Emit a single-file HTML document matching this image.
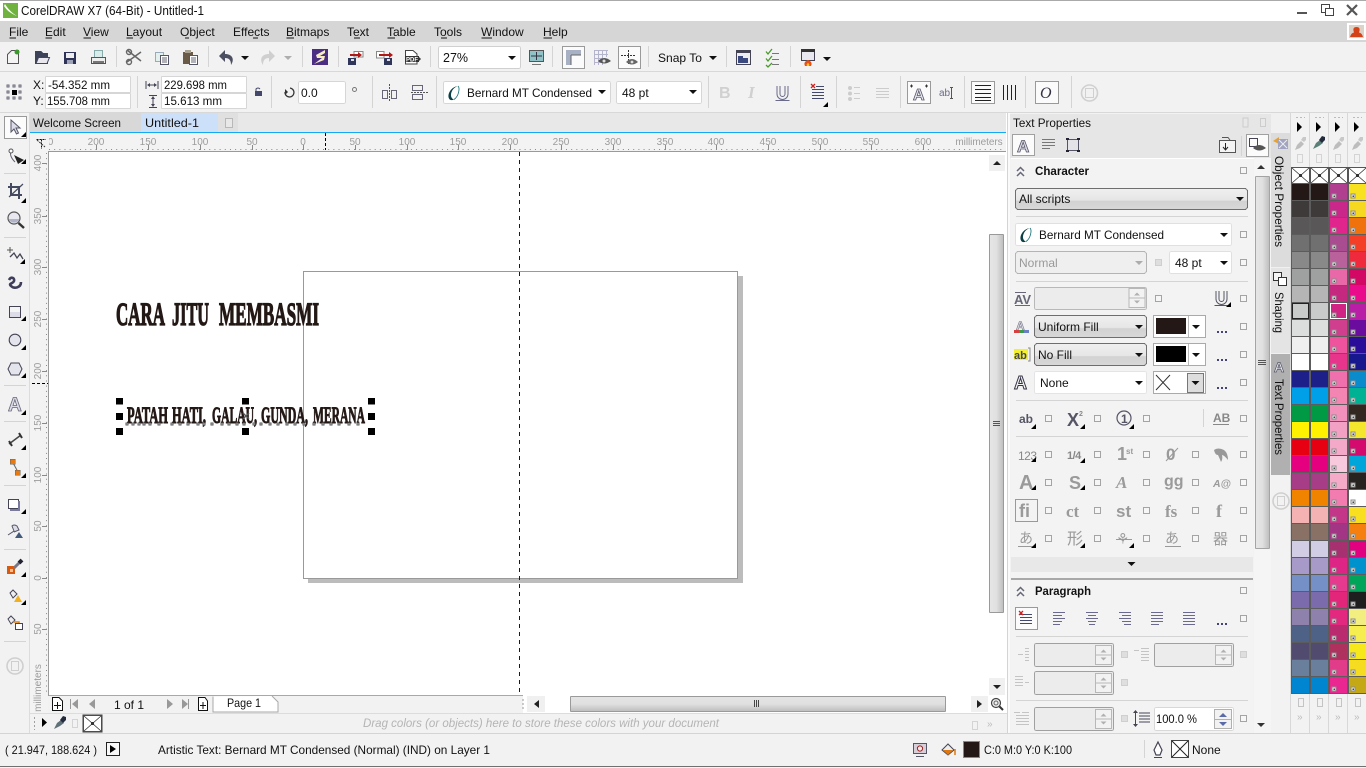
<!DOCTYPE html>
<html lang="en">
<head>
<meta charset="utf-8">
<title>CorelDRAW X7 (64-Bit) - Untitled-1</title>
<style>
html,body{margin:0;padding:0;width:1366px;height:768px;overflow:hidden;background:#f2f2f2}
svg{display:block;position:absolute;left:0;top:0}
text{font-family:"Liberation Sans","Noto Sans CJK JP",sans-serif;font-size:12px;fill:#111}
rect,line{shape-rendering:crispEdges}
.s rect{width:18px;height:17px;stroke:#5c5c5c;stroke-width:1px}
.r text{font-size:10px;fill:#9c9c9c;text-anchor:middle}
.g text{fill:#9a9a9a;font-weight:bold}
.sep{stroke:#d4d4d4;stroke-width:1}
.i{fill:none;stroke:#555;stroke-width:1.2}
.b1 text{font-family:"Liberation Serif",serif;font-size:33px;font-weight:bold;fill:#231815;stroke:#231815;stroke-width:1.3}
.b2 text{font-family:"Liberation Serif",serif;font-size:23px;font-weight:bold;fill:#231815;stroke:#231815;stroke-width:1}
</style>
</head>
<body>
<svg width="1366" height="768" viewBox="0 0 1366 768" xmlns="http://www.w3.org/2000/svg">
<defs>
<linearGradient id="gc" x1="0" y1="0" x2="0" y2="1"><stop offset="0" stop-color="#f0f0f0"/><stop offset=".55" stop-color="#e6e6e6"/><stop offset=".6" stop-color="#d2d2d2"/><stop offset="1" stop-color="#d8d8d8"/></linearGradient>
<linearGradient id="gs" x1="0" y1="0" x2="0" y2="1"><stop offset="0" stop-color="#e4e4e4"/><stop offset=".5" stop-color="#e0e0e0"/><stop offset="1" stop-color="#bdbdbd"/></linearGradient>
<linearGradient id="gv" x1="0" y1="0" x2="1" y2="0"><stop offset="0" stop-color="#e6e6e6"/><stop offset=".5" stop-color="#e0e0e0"/><stop offset="1" stop-color="#bdbdbd"/></linearGradient>
<g id="c"><rect x="-3" y="-3" width="6" height="6" fill="#f6f6f6" stroke="#a4a4a4"/></g>
<g id="cd"><rect x="-3" y="-3" width="6" height="6" fill="#dedede" stroke="#cfcfcf"/></g>
<polygon id="tr" points="0,5 5,5 5,0" fill="#000"/>
<polygon id="dn" points="-4,-2 4,-2 0,2" fill="#111"/>
<g id="spin"><rect x="0" y="0" width="16" height="19" fill="#f2f2f2" stroke="#b8b8b8"/><line x1="0" y1="9.5" x2="16" y2="9.5" stroke="#b8b8b8"/><polygon points="5,7 11,7 8,4" fill="#b0b0b0"/><polygon points="5,12 11,12 8,15" fill="#b0b0b0"/></g>
<g id="num"><rect x="0" y="0" width="79" height="23" rx="2" fill="#ececec" stroke="#a0a0a0"/><use href="#spin" x="61" y="2"/></g>
<g id="dots"><rect x="-4" y="0" width="2" height="2" fill="#44447a"/><rect x="0" y="0" width="2" height="2" fill="#44447a"/><rect x="4" y="0" width="2" height="2" fill="#44447a"/></g>
<g id="xb"><rect x=".5" y=".5" width="18" height="16" fill="#fff" stroke="#555"/><path d="M1 1 L18 16 M18 1 L1 16" stroke="#333" fill="none" stroke-width=".8"/><rect x="8" y="7" width="3" height="3" fill="#333"/></g>
<pattern id="mk" x="1329" y="183" width="19" height="17" patternUnits="userSpaceOnUse"><rect x="3" y="11" width="4" height="4" fill="#eee" stroke="#8c8c8c"/><rect x="4.5" y="12.5" width="1.5" height="1.5" fill="#444"/></pattern>
<g id="dr"><path d="M-5 7 L-3 2 L1 -2 L4 1 L0 5 Z" fill="#bdbdbd"/><path d="M1 -3 L3 -6 L6 -6 L6 -3 L4 -1 Z" fill="#c8c8c8"/></g>
<g id="O"><path d="M9 0C2 1 -2 8 0 12.5C1 14.5 3 14.5 5 13.5C2 12.5 1 9 3 5C4 3 6 1 9 0Z" fill="#0a3f46"/><path d="M9 0C11 2 10 10 5 13.5" fill="none" stroke="#0a6a72" stroke-width=".8"/></g>
</defs>

<!-- title bar -->
<rect x="0" y="0" width="1366" height="21" fill="#fff"/>
<rect x="0" y="0" width="1366" height="1" fill="#aaa"/>
<rect x="3" y="3" width="15" height="15" fill="#6fb23f"/>
<path d="M5 4 C8 9 12 13 17 16 C12 14 7 11 4 6 Z" fill="#fff"/>
<text x="21" y="15" textLength="183" lengthAdjust="spacingAndGlyphs" style="font-size:12.5px">CorelDRAW X7 (64-Bit) - Untitled-1</text>
<rect x="1297" y="12" width="10" height="2" fill="#555"/>
<g fill="none" stroke="#444" stroke-width="1.2"><rect x="1321.5" y="4.5" width="8" height="8"/><rect x="1325.5" y="8.5" width="8" height="7" fill="#fff"/></g>
<path d="M1347 5 L1357 15 M1357 5 L1347 15" stroke="#555" stroke-width="2.2" fill="none"/>

<!-- menu -->
<rect x="0" y="21" width="1366" height="21" fill="#d6d6d6"/>
<g style="font-size:12px">
<text x="9" y="36">File</text><text x="45" y="36">Edit</text><text x="83" y="36">View</text><text x="126" y="36">Layout</text><text x="180" y="36">Object</text><text x="233" y="36">Effects</text><text x="286" y="36">Bitmaps</text><text x="347" y="36">Text</text><text x="387" y="36">Table</text><text x="434" y="36">Tools</text><text x="481" y="36">Window</text><text x="543" y="36">Help</text>
</g>
<path d="M9.5 38H16M45.5 38H52M83.5 38H91M126.5 38H133M185 38H189M253 38H258M286.5 38H294M354 38H360M387.5 38H395M441 38H447M481.5 38H492M543.5 38H552" stroke="#111" fill="none"/>
<rect x="1347" y="23" width="19" height="17" fill="#fff"/>
<rect x="1349" y="25" width="15" height="13" fill="#dcd2c8"/>
<path d="M1350 37Q1351 33 1354 32.5Q1352 27 1356.5 27Q1361 27 1359 32.5Q1362 33 1363 37Z" fill="#d4421a"/>

<!-- standard toolbar -->
<rect x="0" y="42" width="1366" height="29" fill="#f2f2f2"/>
<rect x="0" y="71" width="1366" height="1" fill="#d8d8d8"/>
<path d="M7.5 63.5V54.5L11.5 50.5H18.5V63.5Z" fill="#f4f4f4" stroke="#555"/><circle cx="17" cy="52" r="2.5" fill="#3a9a2a"/>
<path d="M35.5 63.5V51.5H41L43 53.5H47.5V63.5Z" fill="#3c4258" stroke="#3c4258"/><path d="M36 63.5L38.5 57.5H49.5L47 63.5Z" fill="#e8e8ee" stroke="#44485c"/>
<rect x="64" y="52" width="12" height="12" fill="#2e3256"/><rect x="66" y="53" width="8" height="5" fill="#eee"/><rect x="67" y="60" width="6" height="4" fill="#a0a4b8"/>
<rect x="94.5" y="50.5" width="8" height="7" fill="#d8ecea" stroke="#8aa"/><rect x="91.5" y="57.5" width="14" height="6" fill="#eee" stroke="#555"/><rect x="93" y="61" width="11" height="2" fill="#777"/>
<line x1="116.5" y1="46" x2="116.5" y2="67" class="sep"/>
<path d="M127 50 L141 61 M141 52 L127 62" stroke="#666" stroke-width="1.5" fill="none"/><circle cx="129" cy="62" r="2.5" fill="none" stroke="#666" stroke-width="1.4"/><circle cx="129" cy="52" r="2.5" fill="none" stroke="#666" stroke-width="1.4"/>
<rect x="155.5" y="52.5" width="8" height="9" fill="#e4f0ee" stroke="#9ab"/><rect x="160.5" y="55.5" width="8" height="9" fill="#fff" stroke="#556"/><path d="M162 58H167M162 60H167M162 62H167" stroke="#667" fill="none"/>
<rect x="183" y="52" width="10" height="12" fill="#6a5a48"/><rect x="185" y="50" width="6" height="3" fill="#a8a090"/><rect x="189.5" y="55.5" width="8" height="9" fill="#fff" stroke="#556"/><path d="M191 58H196M191 60H196M191 62H196" stroke="#667" fill="none"/>
<line x1="208.5" y1="46" x2="208.5" y2="67" class="sep"/>
<path d="M219 56 L225 50 V54 C232 54 235 59 231 65 C231 60 229 58 225 58 V62 Z" fill="#4c5060"/>
<use href="#dn" x="245" y="58"/>
<path d="M275 56 L269 50 V54 C262 54 259 59 263 65 C263 60 265 58 269 58 V62 Z" fill="#cfcfcf"/>
<use href="#dn" x="288" y="58" opacity=".3"/>
<line x1="302.5" y1="46" x2="302.5" y2="67" class="sep"/>
<rect x="312" y="49" width="16" height="16" fill="#4b2d83"/>
<path d="M325 50 L316 55 L317 58 L322 58 L314 64 L324 60 L325 56 L320 56 L325 53 Z" fill="#f4ecc0"/>
<line x1="338.5" y1="46" x2="338.5" y2="67" class="sep"/>
<rect x="348" y="58" width="8" height="7" fill="#30365a"/><rect x="351" y="59" width="3" height="2" fill="#ddd"/><path d="M354 51.5H363V57H354Z" fill="#fff" stroke="#888"/><path d="M350 55H358" stroke="#b01818" stroke-width="2"/><polygon points="358,52 358,58 362,55" fill="#b01818"/>
<rect x="384" y="58" width="8" height="7" fill="#30365a"/><rect x="387" y="59" width="3" height="2" fill="#ddd"/><path d="M376.5 51.5H384V58H376.5Z" fill="#fff" stroke="#888"/><path d="M379 55H389" stroke="#b01818" stroke-width="2"/><polygon points="389,52 389,58 393,55" fill="#b01818"/>
<path d="M405.5 50.5H413L417 54V64H405.5Z" fill="#fff" stroke="#444"/><rect x="405" y="56" width="14" height="6" fill="#333"/><text x="406" y="61.5" style="font-size:6px;fill:#fff;font-weight:bold">PDF</text><polygon points="418,56 418,62 421,59" fill="#333"/>
<line x1="430.5" y1="46" x2="430.5" y2="67" class="sep"/>
<rect x="438.5" y="46.5" width="82" height="22" rx="2" fill="#fff" stroke="#d0d0d0"/>
<text x="443" y="62" style="font-size:12.5px">27%</text>
<use href="#dn" x="512" y="58"/>
<rect x="529.5" y="50.5" width="14" height="11" fill="#8fc3c8" stroke="#555"/><path d="M531 56H542M536.5 52V60" stroke="#334" fill="none"/><path d="M532 64.5H541" stroke="#777" fill="none"/>
<line x1="552.5" y1="46" x2="552.5" y2="67" class="sep"/>
<rect x="562.5" y="46.5" width="22" height="22" fill="#fbfbfb" stroke="#9a9a9a"/>
<path d="M566 50H581V55H571V65H566Z" fill="#a8b0c4"/><path d="M571 55H581" stroke="#666"/><path d="M571 55V65" stroke="#666"/>
<path d="M594 54.5H608M594 50.5H608M594 58.5H602M594 62.5H602M594.5 50V65M598.5 50V65M602.5 50V65M606.5 50V57" stroke="#b4b4cc" fill="none"/>
<path d="M598 61 Q604 55 611 61 Q604 66 598 61Z" fill="#555"/><circle cx="604" cy="61" r="1.5" fill="#ddd"/>
<rect x="618.5" y="46.5" width="22" height="22" fill="#fbfbfb" stroke="#9a9a9a"/>
<path d="M621 55.5H636M628.5 50V64" stroke="#333" stroke-dasharray="2 1" fill="none"/>
<path d="M626 62 Q632 56 638 62 Q632 67 626 62Z" fill="#666"/><circle cx="632" cy="62" r="1.4" fill="#ddd"/>
<line x1="648.5" y1="46" x2="648.5" y2="67" class="sep"/>
<text x="658" y="62" textLength="44" lengthAdjust="spacingAndGlyphs">Snap To</text>
<use href="#dn" x="713" y="58"/>
<line x1="726.5" y1="46" x2="726.5" y2="67" class="sep"/>
<rect x="736.5" y="50.5" width="14" height="14" fill="#eee" stroke="#445"/><rect x="736" y="50" width="15" height="3" fill="#445"/><path d="M738 63V56H743V58H748V63Z" fill="#3a4a80"/>
<path d="M766 52.5L768 55L772 50M766 59.5L768 62L772 57M766 66L768 68L772 64" stroke="#4a9a2a" stroke-width="1.3" fill="none" transform="translate(0,-1)"/><path d="M772 54.5H779M772 60.5H779M772 65.5H779" stroke="#777" fill="none" transform="translate(0,-1)"/>
<line x1="790.5" y1="46" x2="790.5" y2="67" class="sep"/>
<rect x="801.5" y="49.5" width="13" height="11" fill="#e8e8f0" stroke="#445"/><rect x="801" y="49" width="14" height="3" fill="#333"/><path d="M805 66 Q803 62 808 60 Q813 62 811 66 Z" fill="#e85018"/><path d="M807 66 Q806 64 808 63 Q810 64 809 66Z" fill="#f8c820"/>
<use href="#dn" x="827" y="59"/>

<!-- property bar -->
<rect x="0" y="72" width="1366" height="40" fill="#f2f2f2"/>
<rect x="0" y="112" width="1366" height="1" fill="#d8d8d8"/>
<path d="M7 85H9V87H7ZM13 85H15V87H13ZM19 85H21V87H19ZM7 91H9V93H7ZM19 91H21V93H19ZM7 97H9V99H7ZM13 97H15V99H13ZM19 97H21V99H19Z" fill="none" stroke="#667"/><rect x="12" y="90" width="5" height="5" fill="#000"/>
<text x="33" y="89">X:</text><text x="33" y="105">Y:</text>
<rect x="45.5" y="76.5" width="85" height="16" rx="1" fill="#fff" stroke="#d6d6d6"/><rect x="45.5" y="93.5" width="85" height="15" rx="1" fill="#fff" stroke="#d6d6d6"/>
<text x="48" y="89" textLength="62" lengthAdjust="spacingAndGlyphs">-54.352 mm</text><text x="47" y="105" textLength="63" lengthAdjust="spacingAndGlyphs">155.708 mm</text>
<line x1="137.5" y1="76" x2="137.5" y2="108" class="sep"/>
<path d="M146 81V89M158 81V89M148 85H156" stroke="#445" fill="none"/><polygon points="147,85 150,83 150,87" fill="#445"/><polygon points="157,85 154,83 154,87" fill="#445"/>
<path d="M149 95.5H157M149 107.5H157M153 97V106" stroke="#445" fill="none"/><polygon points="153,96 151,99 155,99" fill="#445"/><polygon points="153,107 151,104 155,104" fill="#445"/>
<rect x="161.5" y="76.5" width="85" height="16" rx="1" fill="#fff" stroke="#d6d6d6"/><rect x="161.5" y="93.5" width="85" height="15" rx="1" fill="#fff" stroke="#d6d6d6"/>
<text x="164" y="89" textLength="63" lengthAdjust="spacingAndGlyphs">229.698 mm</text><text x="164" y="105" textLength="58" lengthAdjust="spacingAndGlyphs">15.613 mm</text>
<rect x="255" y="91" width="7" height="5" fill="#44486a"/><path d="M256 91V89Q258 87 260 89" stroke="#44486a" fill="none"/>
<line x1="271.5" y1="76" x2="271.5" y2="108" class="sep"/>
<path d="M290 88 A4.5 4.5 0 1 1 285 92" stroke="#333" fill="none" stroke-width="1.3"/><polygon points="282,92 288,92 285,95" fill="#333" transform="rotate(-90 285 92)"/>
<rect x="298.5" y="81.5" width="47" height="22" rx="2" fill="#fff" stroke="#d6d6d6"/><text x="301" y="97">0.0</text>
<circle cx="354.5" cy="89.5" r="2" fill="none" stroke="#777"/>
<line x1="372.5" y1="76" x2="372.5" y2="108" class="sep"/>
<path d="M389.5 84V102" stroke="#555" stroke-dasharray="2 1" fill="none"/><rect x="382.5" y="90.5" width="5" height="8" fill="none" stroke="#667"/><rect x="391.5" y="90.5" width="5" height="8" fill="none" stroke="#667"/>
<path d="M411 92.5H428" stroke="#555" stroke-dasharray="2 1" fill="none"/><rect x="412.5" y="85.5" width="10" height="5" fill="none" stroke="#667"/><rect x="412.5" y="94.5" width="10" height="5" fill="none" stroke="#667"/>
<line x1="436.5" y1="76" x2="436.5" y2="108" class="sep"/>
<rect x="443.5" y="81.5" width="167" height="22" rx="2" fill="#fff" stroke="#d6d6d6"/>
<use href="#O" x="449" y="86"/>
<text x="467" y="97" textLength="125" lengthAdjust="spacingAndGlyphs">Bernard MT Condensed</text><use href="#dn" x="602" y="92"/>
<rect x="616.5" y="81.5" width="85" height="22" rx="2" fill="#fff" stroke="#d6d6d6"/><text x="622" y="97">48 pt</text><use href="#dn" x="693" y="92"/>
<line x1="708.5" y1="76" x2="708.5" y2="108" class="sep"/>
<g class="g"><text x="719" y="98" style="font-size:16px;fill:#d0d0d0">B</text><text x="748" y="98" style="font-size:17px;font-style:italic;fill:#d0d0d0;font-family:'Liberation Serif',serif">I</text></g>
<path d="M777 86V94A5 5 0 0 0 788 94V86M780 86V94A2.5 2.5 0 0 0 785 94V86" stroke="#6a6a8a" fill="none"/><path d="M775.5 100.5H789.5" stroke="#6a6a8a" fill="none"/>
<line x1="800.5" y1="76" x2="800.5" y2="108" class="sep"/>
<path d="M812 93.5H824M812 96.5H824M812 99.5H824M812 102.5H824M816 90.5H824" stroke="#44486a" fill="none" transform="translate(0,-4)"/><path d="M811 84L815 88M815 84L811 88" stroke="#d02020" stroke-width="1.3" fill="none"/><use href="#tr" x="823" y="102"/>
<line x1="836.5" y1="76" x2="836.5" y2="108" class="sep"/>
<g fill="#ccc"><circle cx="850" cy="88" r="2"/><circle cx="850" cy="93.5" r="2"/><circle cx="850" cy="99" r="2"/></g><path d="M854 87.5H860M854 93.5H860M854 98.5H860" stroke="#ccc" fill="none"/>
<path d="M876 88.5H889M876 91.5H889M876 94.5H889M876 97.5H889" stroke="#ccc" fill="none"/>
<line x1="900.5" y1="76" x2="900.5" y2="108" class="sep"/>
<rect x="907.5" y="81.5" width="23" height="22" fill="#fbfbfb" stroke="#9a9a9a"/><text x="913" y="100" style="font-size:16px;font-weight:bold;fill:#e8e8f0;stroke:#556;stroke-width:.8">A</text><path d="M910 86H913M911.5 84.5V87.5M925 86H928M926.5 84.5V87.5" stroke="#333" fill="none"/>
<text x="939" y="96" style="font-size:10px;fill:#6a6a8a">ab</text><path d="M950 87.5H953M951.5 88V98M950 98.5H953" stroke="#555" fill="none"/>
<line x1="964.5" y1="76" x2="964.5" y2="108" class="sep"/>
<rect x="971.5" y="81.5" width="23" height="22" fill="#fbfbfb" stroke="#9a9a9a"/><path d="M975 85.5H991M975 89.5H991M975 93.5H991M975 97.5H991M975 100.5H991" stroke="#222" fill="none"/>
<path d="M1003.5 85V100M1007.5 85V100M1011.5 85V100M1015.5 85V100" stroke="#222" fill="none"/>
<line x1="1025.5" y1="76" x2="1025.5" y2="108" class="sep"/>
<rect x="1035.5" y="81.5" width="23" height="22" fill="#fbfbfb" stroke="#9a9a9a"/><text x="1040" y="98" style="font-size:16px;font-style:italic;font-family:'Liberation Serif',serif;fill:#334">O</text>
<line x1="1071.5" y1="76" x2="1071.5" y2="108" class="sep"/>
<circle cx="1089.5" cy="93" r="8" fill="none" stroke="#d0d0d0" stroke-width="1.6"/><rect x="1085.5" y="88.5" width="8" height="9" fill="none" stroke="#d0d0d0"/>

<!-- tabs -->
<rect x="30" y="113" width="977" height="19" fill="#e8e8e8"/>
<rect x="30" y="113" width="111" height="19" fill="#d8d8d8"/>
<rect x="141" y="113" width="77" height="19" fill="#cce0fa"/>
<rect x="218" y="113" width="20" height="19" fill="#e0e0e0"/>
<rect x="225.5" y="118.5" width="7" height="9" fill="#e8e8e8" stroke="#b8b8b8"/>
<text x="33" y="127" textLength="88" lengthAdjust="spacingAndGlyphs">Welcome Screen</text><text x="145" y="127" textLength="54" lengthAdjust="spacingAndGlyphs">Untitled-1</text>
<rect x="30" y="132" width="976" height="1" fill="#12a9f5"/>

<!-- rulers -->
<rect x="30" y="133" width="977" height="18" fill="#f3f3f3"/>
<rect x="30" y="151" width="18" height="562" fill="#f3f3f3"/>
<g class="r">
<text x="45" y="145">250</text>
<text x="96" y="145">200</text><text x="148" y="145">150</text><text x="200" y="145">100</text><text x="252" y="145">50</text><text x="303" y="145">0</text><text x="355" y="145">50</text><text x="407" y="145">100</text><text x="458" y="145">150</text><text x="510" y="145">200</text><text x="561" y="145">250</text><text x="613" y="145">300</text><text x="665" y="145">350</text><text x="716" y="145">400</text><text x="768" y="145">450</text><text x="820" y="145">500</text><text x="871" y="145">550</text><text x="923" y="145">600</text>
<text x="979" y="145" style="font-size:10px;letter-spacing:-.05px">millimeters</text>
<text transform="translate(41,163) rotate(-90)">400</text><text transform="translate(41,216) rotate(-90)">350</text><text transform="translate(41,267) rotate(-90)">300</text><text transform="translate(41,319) rotate(-90)">250</text><text transform="translate(41,371) rotate(-90)">200</text><text transform="translate(41,423) rotate(-90)">150</text><text transform="translate(41,475) rotate(-90)">100</text><text transform="translate(41,526) rotate(-90)">50</text><text transform="translate(41,578) rotate(-90)">0</text><text transform="translate(41,629) rotate(-90)">50</text>
<text transform="translate(41,688) rotate(-90)">millimeters</text>
</g>
<path d="M49 149.5H1005" stroke="#8a8a8a" stroke-dasharray="1 4.17" fill="none"/>
<path d="M46.5 153V695" stroke="#8a8a8a" stroke-dasharray="1 4.17" fill="none"/>
<path d="M96.5 145V150M148.5 145V150M200.5 145V150M252.5 145V150M303.5 145V150M355.5 145V150M407.5 145V150M458.5 145V150M510.5 145V150M561.5 145V150M613.5 145V150M665.5 145V150M716.5 145V150M768.5 145V150M820.5 145V150M871.5 145V150M923.5 145V150" stroke="#8a8a8a" fill="none"/>
<path d="M42 163.5H47M42 216.5H47M42 267.5H47M42 319.5H47M42 371.5H47M42 423.5H47M42 475.5H47M42 526.5H47M42 578.5H47M42 629.5H47" stroke="#8a8a8a" fill="none"/>
<rect x="30" y="133" width="19" height="18" fill="#f3f3f3"/>
<path d="M36.5 139.5H46M41.5 139.5V149" stroke="#111" stroke-dasharray="2 1" fill="none"/><path d="M37 140L45 147" stroke="#333" stroke-dasharray="2 1" fill="none"/>
<path d="M325.5 133V150" stroke="#000" stroke-dasharray="3 2" fill="none"/>
<path d="M32 383.5H48" stroke="#000" stroke-dasharray="3 2" fill="none"/>

<!-- canvas -->
<rect x="49" y="152" width="958" height="544" fill="#fff"/>
<rect x="48" y="151" width="959" height="1" fill="#9a9a9a"/>
<rect x="48" y="151" width="1" height="545" fill="#9a9a9a"/>
<rect x="738" y="276" width="5" height="307" fill="#bcbcbc"/>
<rect x="308" y="579" width="435" height="4" fill="#bcbcbc"/>
<rect x="303" y="271" width="434" height="307" fill="#fff" stroke="#999" stroke-width="1" style="shape-rendering:auto;transform:translate(.5px,.5px)"/>

<g class="b1">
<text x="116" y="325" textLength="49" lengthAdjust="spacingAndGlyphs">CARA</text>
<text x="172" y="325" textLength="37" lengthAdjust="spacingAndGlyphs">JITU</text>
<text x="219" y="325" textLength="100" lengthAdjust="spacingAndGlyphs">MEMBASMI</text>
</g>
<g class="b2">
<text x="127" y="423" textLength="41" lengthAdjust="spacingAndGlyphs">PATAH</text>
<text x="172" y="423" textLength="34" lengthAdjust="spacingAndGlyphs">HATI,</text>
<text x="212" y="423" textLength="45" lengthAdjust="spacingAndGlyphs">GALAU,</text>
<text x="261" y="423" textLength="47" lengthAdjust="spacingAndGlyphs">GUNDA,</text>
<text x="313" y="423" textLength="52" lengthAdjust="spacingAndGlyphs">MERANA</text>
</g>
<path d="M519.5 152V695" stroke="#0000e0" stroke-dasharray="4 4" fill="none"/>
<g fill="#000">
<rect x="116" y="398" width="7" height="6.5"/><rect x="242" y="398" width="7" height="6.5"/><rect x="368" y="398" width="7" height="6.5"/>
<rect x="116" y="413" width="7" height="7"/><rect x="368" y="413" width="7" height="7"/>
<rect x="116" y="428" width="7" height="7"/><rect x="242" y="428" width="7" height="7"/><rect x="368" y="428" width="7" height="7"/>
</g>
<path d="M243 413L249 419M249 413L243 419" stroke="#555" stroke-width="1.4" fill="none"/>
<g fill="#fff" stroke="#555">
<rect x="126" y="423" width="2" height="2"/><rect x="132" y="423" width="2" height="2"/><rect x="138" y="423" width="2" height="2"/><rect x="143" y="423" width="2" height="2"/><rect x="149" y="423" width="2" height="2"/><rect x="158" y="423" width="2" height="2"/>
<rect x="171" y="423" width="2" height="2"/><rect x="179" y="423" width="2" height="2"/><rect x="187" y="423" width="2" height="2"/><rect x="197" y="423" width="2" height="2"/><rect x="203" y="423" width="2" height="2"/>
<rect x="211" y="423" width="2" height="2"/><rect x="221" y="423" width="2" height="2"/><rect x="228" y="423" width="2" height="2"/><rect x="236" y="423" width="2" height="2"/><rect x="243" y="423" width="2" height="2"/><rect x="253" y="423" width="2" height="2"/>
<rect x="260" y="423" width="2" height="2"/><rect x="269" y="423" width="2" height="2"/><rect x="277" y="423" width="2" height="2"/><rect x="286" y="423" width="2" height="2"/><rect x="294" y="423" width="2" height="2"/><rect x="303" y="423" width="2" height="2"/>
<rect x="313" y="423" width="2" height="2"/><rect x="322" y="423" width="2" height="2"/><rect x="330" y="423" width="2" height="2"/><rect x="338" y="423" width="2" height="2"/><rect x="348" y="423" width="2" height="2"/><rect x="357" y="423" width="2" height="2"/>
</g>

<!-- canvas vscroll -->
<rect x="989" y="155" width="16" height="16" fill="#f0f0f0"/><polygon points="993,165 1001,165 997,161" fill="#222"/>
<rect x="989.5" y="234.5" width="14" height="378" rx="1" fill="url(#gv)" stroke="#9a9a9a"/>
<path d="M993 421.5H1000M993 423.5H1000M993 425.5H1000" stroke="#555" fill="none"/>
<rect x="989" y="678" width="16" height="17" fill="#f0f0f0"/><polygon points="993,685 1001,685 997,689" fill="#222"/>
<rect x="1006" y="113" width="1" height="600" fill="#fff"/><rect x="1007" y="113" width="1" height="620" fill="#d4d4d4"/>

<!-- page nav / hscroll -->
<rect x="49" y="695" width="958" height="18" fill="#fff"/>
<rect x="49" y="695" width="474" height="18" fill="#f2f2f2"/>
<rect x="49" y="695" width="474" height="1" fill="#a8a8a8"/>
<path d="M52.5 697.5H59L62.5 701V710.5H52.5Z" fill="#fff" stroke="#111"/><path d="M57.5 702V709M54 705.5H61" stroke="#111" fill="none"/>
<rect x="70" y="699" width="1" height="10" fill="#999"/><polygon points="78,699 78,709 72,704" fill="#999"/>
<polygon points="95,699 95,709 89,704" fill="#999"/>
<text x="114" y="709">1 of 1</text>
<polygon points="167,699 167,709 173,704" fill="#999"/>
<polygon points="182,699 182,709 188,704" fill="#999"/><rect x="188" y="699" width="1" height="10" fill="#999"/>
<path d="M198.5 697.5H205L207.5 701V710.5H198.5Z" fill="#fff" stroke="#111"/><path d="M203 702V709M200 705.5H206" stroke="#111" fill="none"/>
<path d="M213 696.5V712H278V702L272 696" fill="#fff" stroke="#a8a8a8"/>
<text x="227" y="707" textLength="34" lengthAdjust="spacingAndGlyphs">Page 1</text>
<path d="M523 699V709" stroke="#999" stroke-dasharray="2 2" fill="none"/>
<rect x="527" y="696" width="18" height="16" fill="#f0f0f0"/><polygon points="539,700 539,708 534,704" fill="#222"/>
<rect x="570.5" y="696.5" width="375" height="15" rx="1" fill="url(#gs)" stroke="#9a9a9a"/>
<path d="M754.5 700V707M756.5 700V707M758.5 700V707" stroke="#444" fill="none"/>
<rect x="971" y="696" width="17" height="16" fill="#f0f0f0"/><polygon points="977,700 977,708 982,704" fill="#222"/>
<circle cx="996" cy="703" r="4.5" fill="#eee" stroke="#444" stroke-width="1.2"/><path d="M999.5 706.5L1003 710" stroke="#333" stroke-width="2"/><circle cx="996" cy="703" r="2" fill="none" stroke="#666"/>

<!-- document palette -->
<rect x="30" y="713" width="977" height="20" fill="#f2f2f2"/>
<rect x="30" y="713" width="977" height="1" fill="#dcdcdc"/>
<path d="M34.5 717V730" stroke="#a0a0a0" stroke-dasharray="2 2" fill="none"/>
<polygon points="42,718 42,727 47,722.5" fill="#000"/>
<g transform="translate(60,723)"><path d="M-6 6 L-3 0 L1 -3 L4 0 L0 3 Z" fill="#607078"/><path d="M0 -3 L3 -7 L6 -6 L6 -3 L3 0 Z" fill="#222a3c"/></g>
<rect x="72.5" y="719.5" width="5" height="8" fill="#f2f2f2" stroke="#d4d4d4"/>
<use href="#xb" x="83" y="715"/>
<rect x="83" y="715" width="19" height="17" fill="none" stroke="#444"/>
<text x="363" y="727" textLength="356" lengthAdjust="spacingAndGlyphs" style="font-style:italic;font-size:12px;fill:#b4b4b4">Drag colors (or objects) here to store these colors with your document</text>
<rect x="972.5" y="721.5" width="5" height="8" fill="#f2f2f2" stroke="#d4d4d4"/>
<text x="987" y="727" style="font-size:10px;fill:#bbb">»</text>

<!-- left toolbox -->
<rect x="0" y="113" width="30" height="620" fill="#f2f2f2"/>
<rect x="29" y="113" width="1" height="620" fill="#dcdcdc"/>
<rect x="4.5" y="116.5" width="22" height="22" fill="#fcfcfc" stroke="#999"/>
<path d="M11 120L11 132L14 129L16.5 134L18.5 133L16 128L20 128Z" fill="#dcdce8" stroke="#556"/><use href="#tr" x="21" y="132"/>
<path d="M11 151Q9 156 15 162" stroke="#667" fill="none"/><circle cx="11" cy="151" r="2" fill="#fff" stroke="#555"/><polygon points="14,155 24,160 18,164" fill="#222"/><use href="#tr" x="21" y="159"/>
<line x1="4" y1="173.5" x2="26" y2="173.5" class="sep"/>
<path d="M11 183V195H22M8 187H19V199" stroke="#444a60" stroke-width="2" fill="none"/><path d="M9 197L23 184" stroke="#444a60" stroke-width="1.2" fill="none"/><use href="#tr" x="21" y="198"/>
<circle cx="14" cy="218" r="6" fill="#e8e8ee" stroke="#555" stroke-width="1.2"/><path d="M8.5 219H19.5A6 6 0 0 1 8.5 219Z" fill="#b0b4c8"/><path d="M18.5 223L24 228" stroke="#333" stroke-width="2.4"/>
<line x1="4" y1="237.5" x2="26" y2="237.5" class="sep"/>
<path d="M7 250H13M10 247V253" stroke="#555" fill="none"/><path d="M10 257L14 253L17 258L20 254L23 259" stroke="#445" stroke-width="1.3" fill="none"/><use href="#tr" x="20" y="259"/>
<path d="M9 280C11 276 15 278 14 281C13 284 8 283 11 286C14 289 21 288 21 282" stroke="#3e3e5a" stroke-width="2.6" fill="none"/>
<rect x="9.5" y="306.5" width="11" height="11" fill="#dcdce8" stroke="#445"/><rect x="10" y="307" width="10" height="5" fill="#f4f4f4"/><use href="#tr" x="21" y="316"/>
<circle cx="15" cy="340" r="5.8" fill="#e4e4ec" stroke="#445" stroke-width="1.1"/><use href="#tr" x="21" y="345"/>
<path d="M11 363H19L22 369L19 375H11L8 369Z" fill="#e4e4ec" stroke="#445"/><use href="#tr" x="21" y="373"/>
<line x1="4" y1="385.5" x2="26" y2="385.5" class="sep"/>
<text x="8" y="411" style="font-size:19px;font-weight:bold;fill:#dcdce8;stroke:#667;stroke-width:.8">A</text><use href="#tr" x="21" y="410"/>
<line x1="4" y1="421.5" x2="26" y2="421.5" class="sep"/>
<path d="M9 444L21 435" stroke="#444" stroke-width="1.5"/><path d="M9 441L12 446M19 433L22 438" stroke="#333" stroke-width="2" fill="none"/><use href="#tr" x="21" y="445"/>
<path d="M12 461L18 472" stroke="#666"/><rect x="10" y="459" width="5" height="5" fill="#e87a10" stroke="#666" stroke-width=".5"/><rect x="15" y="470" width="5" height="5" fill="#e87a10" stroke="#666" stroke-width=".5"/><use href="#tr" x="21" y="473"/>
<line x1="4" y1="485.5" x2="26" y2="485.5" class="sep"/>
<rect x="8.5" y="499.5" width="10" height="9" fill="#fff" stroke="#445"/><path d="M19 501V510H10" stroke="#7a7aa0" stroke-width="2" fill="none"/><use href="#tr" x="21" y="509"/>
<path d="M8 535L14 531L12 526Q14 524 17 526L19 530L14 532" fill="#dcdce8" stroke="#556"/><polygon points="15,538 23,538 19,532" fill="#445a7a"/>
<line x1="4" y1="549.5" x2="26" y2="549.5" class="sep"/>
<rect x="7" y="566" width="8" height="8" fill="#d85a10"/><rect x="10" y="569" width="3" height="3" fill="#f8c090"/><path d="M14 568L21 561" stroke="#778" stroke-width="3"/><path d="M19 563L22 560" stroke="#223" stroke-width="4"/><use href="#tr" x="21" y="572"/>
<path d="M10 593L13 590L17 594L13 598Z" fill="#eee" stroke="#445"/><polygon points="14,602 22,602 18,595" fill="#f0b020"/><use href="#tr" x="21" y="600"/>
<path d="M8 619L11 616L15 620L11 624Z" fill="#eee" stroke="#445"/><path d="M13 622H19V628" stroke="#e08010" stroke-width="1.5" fill="none"/><rect x="15.5" y="623.5" width="7" height="6" fill="#fff" stroke="#445"/>
<line x1="4" y1="641.5" x2="26" y2="641.5" class="sep"/>
<circle cx="15" cy="666" r="8" fill="none" stroke="#cfcfcf" stroke-width="1.6"/><rect x="11.5" y="661.5" width="7" height="9" fill="none" stroke="#cfcfcf"/>

<!-- docker -->
<rect x="1008" y="113" width="263" height="620" fill="#f2f2f2"/>
<rect x="1010" y="114" width="261" height="19" fill="#e6e6e6"/>
<rect x="1008" y="113" width="2" height="620" fill="#fafafa"/>
<text x="1013" y="127" textLength="78" lengthAdjust="spacingAndGlyphs">Text Properties</text>
<rect x="1010" y="133" width="261" height="25" fill="#e6e6e6"/>
<rect x="1260.5" y="118.5" width="5" height="8" fill="#e8e8e8" stroke="#ccc"/><rect x="1243" y="118" width="5" height="9" fill="#e8e8e8" stroke="#ccc"/>
<rect x="1012.5" y="134.5" width="22" height="21" fill="#fbfbfb" stroke="#a0a0a0"/><text x="1017" y="152" style="font-size:17px;font-weight:bold;fill:#dcdce8;stroke:#556;stroke-width:.8">A</text>
<path d="M1042 139.5H1055M1042 142.5H1055M1042 145.5H1055M1042 148.5H1050" stroke="#777" fill="none"/>
<rect x="1067.5" y="139.5" width="11" height="11" fill="#e4e4e8" stroke="#556"/><path d="M1066 139H1069M1077 139H1080M1066 151H1069M1077 151H1080" stroke="#223" stroke-width="2" fill="none"/>
<path d="M1219.5 140.5H1235.5V152.5H1219.5Z" fill="#f4f4f4" stroke="#555"/><path d="M1222 137.5H1228L1230 140" fill="none" stroke="#555"/><path d="M1225.5 143V149M1223 147L1225.5 150L1228 147" stroke="#222" fill="none"/>
<line x1="1241.5" y1="136" x2="1241.5" y2="156" class="sep"/>
<rect x="1246.5" y="134.5" width="22" height="22" fill="#fbfbfb" stroke="#a0a0a0"/><rect x="1249.5" y="138.5" width="8" height="8" fill="none" stroke="#445"/><path d="M1253 148Q1259 142 1266 148Q1259 153 1253 148Z" fill="#555"/>
<rect x="1011" y="158" width="242" height="575" fill="#f3f3f3"/>
<rect x="1011" y="158" width="243" height="1" fill="#fff"/>

<!-- Character -->
<path d="M1017 171L1020.5 167.5L1024 171M1017 176L1020.5 172.5L1024 176" stroke="#667" stroke-width="1.5" fill="none"/>
<text x="1035" y="175" textLength="54" lengthAdjust="spacingAndGlyphs" style="font-weight:bold">Character</text>
<use href="#c" x="1243.5" y="170.5"/>
<rect x="1015.5" y="188.5" width="232" height="21" rx="3" fill="url(#gc)" stroke="#6e6e6e"/><text x="1019" y="203">All scripts</text><use href="#dn" x="1240" y="199"/>
<line x1="1016" y1="216.5" x2="1248" y2="216.5" class="sep"/>
<rect x="1015.5" y="223.5" width="216" height="22" rx="2" fill="#fff" stroke="#e0e0e0"/>
<use href="#O" x="1021" y="228"/>
<text x="1039" y="239" textLength="125" lengthAdjust="spacingAndGlyphs">Bernard MT Condensed</text><use href="#dn" x="1224" y="235"/><use href="#c" x="1243.5" y="234.5"/>
<rect x="1015.5" y="251.5" width="131" height="22" rx="3" fill="#efefef" stroke="#b4b4b4"/><text x="1019" y="267" style="fill:#999">Normal</text><use href="#dn" x="1139" y="263" opacity=".3"/>
<use href="#cd" x="1158.5" y="262.5"/>
<rect x="1169.5" y="251.5" width="62" height="22" rx="2" fill="#fff" stroke="#e0e0e0"/><text x="1175" y="267">48 pt</text><use href="#dn" x="1224" y="263"/><use href="#c" x="1243.5" y="262.5"/>
<line x1="1016" y1="281.5" x2="1248" y2="281.5" class="sep"/>
<!-- row kerning -->
<text x="1014" y="304" style="font-size:13px;font-weight:bold;fill:#667">AV</text><path d="M1015 292.5H1026M1015 305.5H1030" stroke="#667" fill="none"/>
<rect x="1034.5" y="287.5" width="112" height="22" rx="2" fill="#ececec" stroke="#b8b8b8"/><use href="#spin" x="1129" y="288.5"/>
<use href="#c" x="1158.5" y="298.5"/>
<path d="M1216 291V299A5 5 0 0 0 1227 299V291M1219 291V299A2.5 2.5 0 0 0 1224 299V291" stroke="#556" fill="none"/><path d="M1214.5 305.5H1228" stroke="#556" fill="none"/><use href="#tr" x="1226" y="302"/>
<use href="#c" x="1243.5" y="298.5"/>
<!-- fill -->
<text x="1016" y="330" style="font-size:12px;font-weight:bold;fill:#e0e0e8;stroke:#778;stroke-width:.6">A</text><rect x="1014" y="330" width="5" height="3" fill="#d84040"/><rect x="1019" y="330" width="5" height="3" fill="#3a9a48"/><rect x="1024" y="330" width="5" height="3" fill="#6a80c0"/>
<rect x="1034.5" y="315.5" width="112" height="22" rx="3" fill="url(#gc)" stroke="#6e6e6e"/><text x="1038" y="331">Uniform Fill</text><use href="#dn" x="1139" y="327"/>
<rect x="1153.5" y="315.5" width="52" height="22" fill="#fff" stroke="#aaa"/><rect x="1156" y="318" width="30" height="16" fill="#231815"/><line x1="1188.5" y1="316" x2="1188.5" y2="337" stroke="#bbb"/><use href="#dn" x="1196" y="327"/>
<use href="#dots" x="1221" y="331"/><use href="#c" x="1243.5" y="326.5"/>
<rect x="1014" y="349" width="14" height="11" fill="#f2f030"/><text x="1014" y="359" style="font-size:11px;font-weight:bold;fill:#445">ab</text><path d="M1028 348H1030V361H1028" stroke="#888" fill="none"/>
<rect x="1034.5" y="343.5" width="112" height="22" rx="3" fill="url(#gc)" stroke="#6e6e6e"/><text x="1038" y="359">No Fill</text><use href="#dn" x="1139" y="355"/>
<rect x="1153.5" y="343.5" width="52" height="22" fill="#fff" stroke="#aaa"/><rect x="1156" y="346" width="30" height="16" fill="#000"/><line x1="1188.5" y1="344" x2="1188.5" y2="365" stroke="#bbb"/><use href="#dn" x="1196" y="355"/>
<use href="#dots" x="1221" y="359"/><use href="#c" x="1243.5" y="354.5"/>
<text x="1014" y="389" style="font-size:18px;font-weight:bold;fill:#f4f4f4;stroke:#334;stroke-width:1">A</text>
<rect x="1034.5" y="371.5" width="112" height="22" rx="2" fill="#fff" stroke="#e4e4e4"/><text x="1040" y="387">None</text><use href="#dn" x="1139" y="383"/>
<rect x="1153.5" y="371.5" width="52" height="22" fill="#fff" stroke="#aaa"/><path d="M1156 375L1170 390M1170 375L1156 390" stroke="#333" fill="none"/><rect x="1187.5" y="373.5" width="16" height="19" fill="#ddd" stroke="#777"/><use href="#dn" x="1195.5" y="383"/>
<use href="#dots" x="1221" y="387"/><use href="#c" x="1243.5" y="382.5"/>
<line x1="1016" y1="400.5" x2="1248" y2="400.5" class="sep"/>
<text x="1019" y="423" style="font-size:12px;font-weight:bold;fill:#556">ab</text><use href="#tr" x="1031" y="424"/><use href="#c" x="1048.5" y="418.5"/>
<text x="1067" y="426" style="font-size:18px;font-weight:bold;fill:#556">X</text><text x="1079" y="416" style="font-size:7px;fill:#888;font-weight:bold">2</text><use href="#tr" x="1080" y="424"/><use href="#c" x="1097.5" y="418.5"/>
<circle cx="1124" cy="418" r="7" fill="none" stroke="#556" stroke-width="1.2"/><text x="1121" y="423" style="font-size:12px;font-weight:bold;fill:#556">1</text><use href="#tr" x="1129" y="424"/><use href="#c" x="1146.5" y="418.5"/>
<line x1="1203.5" y1="409" x2="1203.5" y2="427" class="sep"/>
<text x="1213" y="422" style="font-size:12px;font-weight:bold;fill:#888">AB</text><path d="M1213 424.5H1229" stroke="#888" fill="none"/>
<use href="#c" x="1243.5" y="418.5"/>
<line x1="1016" y1="436.5" x2="1248" y2="436.5" class="sep"/>
<!-- opentype grid -->
<g class="g">
<text x="1018" y="460" style="font-size:12px;font-weight:normal;fill:#888;letter-spacing:-.5px">123</text>
<text x="1067" y="459" style="font-size:11px;fill:#888;letter-spacing:-.5px">1/4</text>
<text x="1117" y="460" style="font-size:18px">1</text><text x="1126" y="454" style="font-size:8px">st</text>
<text x="1166" y="460" style="font-size:17px">0</text><path d="M1166 461L1178 448" stroke="#999" fill="none"/>
<path d="M1214 450Q1218 447 1224 450Q1228 453 1228 460Q1224 455 1222 455Q1223 459 1221 462Q1219 457 1218 455Q1215 455 1214 450Z" fill="#999"/>
<text x="1019" y="489" style="font-size:20px">A</text>
<text x="1069" y="489" style="font-size:18px">S</text>
<text x="1116" y="488" style="font-size:17px;font-style:italic;font-family:'Liberation Serif',serif">A</text>
<text x="1164" y="486" style="font-size:16px">gg</text>
<text x="1213" y="487" style="font-size:10.5px;font-style:italic">A@</text>
<text x="1019" y="517" style="font-size:18px">fi</text>
<text x="1066" y="517" style="font-size:17px;font-family:'Liberation Serif',serif">ct</text>
<text x="1116" y="517" style="font-size:17px">st</text>
<text x="1165" y="517" style="font-size:17px;font-family:'Liberation Serif',serif">fs</text>
<text x="1216" y="517" style="font-size:18px;font-family:'Liberation Serif',serif">f</text>
<text x="1019" y="543" style="font-size:14px;font-weight:normal">あ</text>
<text x="1067" y="544" style="font-size:16px;font-weight:normal">形</text>
<text x="1116" y="544" style="font-size:15px;font-weight:normal">⚘</text>
<text x="1165" y="543" style="font-size:14px;font-weight:normal">あ</text>
<text x="1213" y="544" style="font-size:15px;font-weight:normal">器</text>
</g>
<path d="M1018 546.5H1033M1165 546.5H1181M1116 539.5H1132" stroke="#999" fill="none"/>
<use href="#tr" x="1031" y="457"/><use href="#tr" x="1080" y="458"/><use href="#tr" x="1031" y="485"/><use href="#tr" x="1080" y="485"/><use href="#tr" x="1031" y="543"/><use href="#tr" x="1080" y="543"/><use href="#tr" x="1129" y="543"/>
<use href="#c" x="1048.5" y="454.5"/><use href="#c" x="1097.5" y="454.5"/><use href="#c" x="1146.5" y="454.5"/><use href="#c" x="1195.5" y="454.5"/><use href="#c" x="1243.5" y="454.5"/>
<use href="#c" x="1048.5" y="482.5"/><use href="#c" x="1097.5" y="482.5"/><use href="#c" x="1146.5" y="482.5"/><use href="#c" x="1195.5" y="482.5"/><use href="#c" x="1243.5" y="482.5"/>
<use href="#c" x="1048.5" y="510.5"/><use href="#c" x="1097.5" y="510.5"/><use href="#c" x="1146.5" y="510.5"/><use href="#c" x="1195.5" y="510.5"/><use href="#c" x="1243.5" y="510.5"/>
<use href="#c" x="1048.5" y="538.5"/><use href="#c" x="1097.5" y="538.5"/><use href="#c" x="1146.5" y="538.5"/><use href="#c" x="1195.5" y="538.5"/><use href="#c" x="1243.5" y="538.5"/>
<rect x="1015.5" y="499.5" width="22" height="22" fill="none" stroke="#999"/>
<rect x="1011" y="557" width="242" height="15" fill="#e8e8e8"/><use href="#dn" x="1131.5" y="564"/>
<rect x="1011" y="578" width="242" height="2" fill="#a8a8a8"/>
<!-- Paragraph -->
<path d="M1017 591L1020.5 587.5L1024 591M1017 596L1020.5 592.5L1024 596" stroke="#667" stroke-width="1.5" fill="none"/>
<text x="1035" y="595" textLength="56" lengthAdjust="spacingAndGlyphs" style="font-weight:bold">Paragraph</text><use href="#c" x="1243.5" y="590.5"/>
<rect x="1015.5" y="607.5" width="22" height="22" fill="#fbfbfb" stroke="#999"/>
<path d="M1020 614.5H1032M1020 617.5H1032M1020 620.5H1032M1020 623.5H1032" stroke="#44486a" fill="none"/><path d="M1019 611L1023 615M1023 611L1019 615" stroke="#d02020" stroke-width="1.3" fill="none"/>
<path d="M1053 612.5H1065M1053 615.5H1062M1053 618.5H1065M1053 621.5H1062M1053 624.5H1060" stroke="#6a6a90" fill="none"/>
<path d="M1086 612.5H1098M1088 615.5H1096M1086 618.5H1098M1088 621.5H1096M1089 624.5H1095" stroke="#6a6a90" fill="none"/>
<path d="M1119 612.5H1131M1122 615.5H1131M1119 618.5H1131M1122 621.5H1131M1124 624.5H1131" stroke="#6a6a90" fill="none"/>
<path d="M1151 612.5H1163M1151 615.5H1163M1151 618.5H1163M1151 621.5H1163M1151 624.5H1159" stroke="#6a6a90" fill="none"/>
<path d="M1183 612.5H1195M1183 615.5H1195M1183 618.5H1195M1183 621.5H1195M1183 624.5H1195" stroke="#6a6a90" fill="none"/>
<use href="#dots" x="1221" y="623"/><use href="#c" x="1243.5" y="618.5"/>
<line x1="1016" y1="636.5" x2="1248" y2="636.5" class="sep"/>
<path d="M1018 654.5H1023M1025 648.5H1029M1025 651.5H1029M1025 654.5H1029M1025 657.5H1029M1025 660.5H1029" stroke="#c4c4c4" fill="none"/>
<use href="#num" x="1034.5" y="643.5"/><use href="#cd" x="1124.5" y="654.5"/>
<path d="M1134 650.5H1139M1141 648.5H1149M1141 651.5H1149M1141 654.5H1149M1141 657.5H1149M1141 660.5H1149" stroke="#c4c4c4" fill="none"/>
<use href="#num" x="1154.5" y="643.5"/><use href="#cd" x="1243.5" y="654.5"/>
<path d="M1015 676.5H1023M1015 679.5H1023M1015 682.5H1023M1015 685.5H1023M1025 682.5H1029" stroke="#c4c4c4" fill="none"/>
<use href="#num" x="1034.5" y="671.5"/><use href="#cd" x="1124.5" y="682.5"/>
<line x1="1016" y1="700.5" x2="1248" y2="700.5" class="sep"/>
<path d="M1014 712.5H1020M1022 712.5H1029M1016 715.5H1029M1016 718.5H1029M1016 721.5H1029M1016 724.5H1029" stroke="#c4c4c4" fill="none"/>
<use href="#num" x="1034.5" y="707.5"/><use href="#cd" x="1124.5" y="718.5"/>
<path d="M1135.5 712V725M1139 713H1150M1139 716H1150M1139 719H1150M1139 722H1150" stroke="#445" fill="none"/><polygon points="1135.5,710 1133,713 1138,713" fill="#445"/><polygon points="1135.5,727 1133,724 1138,724" fill="#445"/>
<rect x="1154.5" y="707.5" width="79" height="23" rx="2" fill="#fff" stroke="#d8d8d8"/><text x="1156" y="723" textLength="41" lengthAdjust="spacingAndGlyphs">100.0 %</text>
<rect x="1214.5" y="709.5" width="17" height="19" fill="#f2f2f2" stroke="#b0b0b0"/><line x1="1214" y1="719.5" x2="1232" y2="719.5" stroke="#b0b0b0"/><polygon points="1219,717 1227,717 1223,713" fill="#5a6aa8"/><polygon points="1219,722 1227,722 1223,726" fill="#5a6aa8"/>
<use href="#c" x="1243.5" y="718.5"/>

<!-- docker scrollbar -->
<rect x="1254" y="158" width="17" height="575" fill="#f5f5f5"/>
<polygon points="1257,169 1265,169 1261,165" fill="#333"/>
<rect x="1255.5" y="176.5" width="14" height="372" rx="1" fill="url(#gv)" stroke="#a4a4a4"/>
<path d="M1258 360.5H1266M1258 362.5H1266M1258 364.5H1266" stroke="#555" fill="none"/>
<polygon points="1257,723 1265,723 1261,727" fill="#333"/>

<!-- vertical tab strip -->
<rect x="1271" y="113" width="20" height="620" fill="#f0f0f0"/>
<rect x="1271" y="133" width="20" height="134" fill="#dcdcdc"/>
<rect x="1271" y="268" width="20" height="85" fill="#e4e4e4"/>
<rect x="1271" y="354" width="20" height="121" fill="#b0b0b0"/>
<rect x="1271" y="475" width="20" height="258" fill="#f2f2f2"/>
<path d="M1273 141L1279 137L1279 144Z" fill="#e8a030"/><rect x="1278" y="139" width="10" height="10" fill="#a0a4c0"/><path d="M1279 140L1287 148M1287 140L1279 148" stroke="#eee" fill="none"/>
<g>
<text transform="translate(1275,156) rotate(90)" textLength="91" lengthAdjust="spacingAndGlyphs">Object Properties</text>
<text transform="translate(1275,292) rotate(90)" textLength="41" lengthAdjust="spacingAndGlyphs">Shaping</text>
<text transform="translate(1275,379) rotate(90)" textLength="76" lengthAdjust="spacingAndGlyphs">Text Properties</text>
</g>
<rect x="1273.5" y="272.5" width="8" height="8" fill="#f4f4f4" stroke="#333"/><rect x="1278.5" y="277.5" width="8" height="8" fill="#fff" stroke="#333"/>
<text x="1274" y="372" style="font-size:14px;font-weight:bold;fill:#e8e8f0;stroke:#556;stroke-width:.7">A</text>
<circle cx="1281" cy="501" r="8" fill="none" stroke="#cfcfcf" stroke-width="1.6"/><rect x="1277.5" y="496.5" width="7" height="9" fill="none" stroke="#cfcfcf"/>

<!-- palettes -->
<rect x="1291" y="113" width="75" height="620" fill="#f2f2f2"/>
<path d="M1309.5 113V733M1328.5 113V733M1347.5 113V733" stroke="#d8d8d8" fill="none"/>
<rect x="1290" y="113" width="1" height="620" fill="#d8d8d8"/>
<path d="M1296 117.5H1305M1315 117.5H1324M1334 117.5H1343M1353 117.5H1362" stroke="#bbb" stroke-dasharray="2 2" fill="none"/>
<polygon points="1297,122 1297,132 1302,127" fill="#000"/><polygon points="1316,122 1316,132 1321,127" fill="#000"/><polygon points="1335,122 1335,132 1340,127" fill="#000"/><polygon points="1354,122 1354,132 1359,127" fill="#000"/>
<use href="#dr" x="1300" y="143"/><use href="#dr" x="1338" y="143"/><use href="#dr" x="1357" y="143"/>
<g transform="translate(1319,143)"><path d="M-6 6 L-3 0 L1 -3 L4 0 L0 3 Z" fill="#5a8078"/><path d="M0 -3 L3 -7 L6 -6 L6 -3 L3 0 Z" fill="#222a3c"/></g>
<path d="M1297.5 154.5H1302.5V162.5H1297.5ZM1316.5 154.5H1321.5V162.5H1316.5ZM1335.5 154.5H1340.5V162.5H1335.5ZM1354.5 154.5H1359.5V162.5H1354.5Z" fill="#f2f2f2" stroke="#d4d4d4"/>
<use href="#xb" x="1291" y="167"/><use href="#xb" x="1310" y="167"/><use href="#xb" x="1329" y="167"/><use href="#xb" x="1348" y="167"/>

<g id="p1" class="s" transform="translate(1291.5,0)">
<rect y="183.5" fill="#231815"/><rect y="200.5" fill="#3e3a39"/><rect y="217.5" fill="#595757"/><rect y="234.5" fill="#717071"/><rect y="251.5" fill="#898989"/><rect y="268.5" fill="#9fa0a0"/><rect y="285.5" fill="#b5b5b6"/><rect y="302.5" fill="#c9caca"/><rect y="319.5" fill="#dcdddd"/><rect y="336.5" fill="#efefef"/><rect y="353.5" fill="#ffffff"/><rect y="370.5" fill="#1d2088"/><rect y="387.5" fill="#00a0e9"/><rect y="404.5" fill="#009944"/><rect y="421.5" fill="#fff100"/><rect y="438.5" fill="#e60012"/><rect y="455.5" fill="#e4007f"/><rect y="472.5" fill="#a73d87"/><rect y="489.5" fill="#f08300"/><rect y="506.5" fill="#f5b2b2"/><rect y="523.5" fill="#8a7166"/><rect y="540.5" fill="#d0cde4"/><rect y="557.5" fill="#a89ac8"/><rect y="574.5" fill="#7590c6"/><rect y="591.5" fill="#7b6bad"/><rect y="608.5" fill="#8e82ad"/><rect y="625.5" fill="#4e6288"/><rect y="642.5" fill="#524b70"/><rect y="659.5" fill="#6a7f9c"/><rect y="676.5" fill="#0086d1"/>
</g>
<use href="#p1" x="19"/>
<rect x="1292.5" y="303.5" width="16" height="15" fill="none" stroke="#222"/>
<g class="s" transform="translate(1329.5,0)">
<rect y="183.5" fill="#b0408f"/><rect y="200.5" fill="#c9278a"/><rect y="217.5" fill="#e0258d"/><rect y="234.5" fill="#a94c90"/><rect y="251.5" fill="#b8619b"/><rect y="268.5" fill="#e868a8"/><rect y="285.5" fill="#c5287f"/><rect y="302.5" fill="#d02384"/><rect y="319.5" fill="#cf3f8e"/><rect y="336.5" fill="#ef539e"/><rect y="353.5" fill="#e8358c"/><rect y="370.5" fill="#f06fad"/><rect y="387.5" fill="#f285b2"/><rect y="404.5" fill="#f291bb"/><rect y="421.5" fill="#f2a0c4"/><rect y="438.5" fill="#f5a9c9"/><rect y="455.5" fill="#f8c8dc"/><rect y="472.5" fill="#f5abc8"/><rect y="489.5" fill="#f27cb0"/><rect y="506.5" fill="#c43788"/><rect y="523.5" fill="#a23684"/><rect y="540.5" fill="#a63070"/><rect y="557.5" fill="#dd2585"/><rect y="574.5" fill="#e53a8e"/><rect y="591.5" fill="#e2277a"/><rect y="608.5" fill="#e2297f"/><rect y="625.5" fill="#b92a6e"/><rect y="642.5" fill="#ae315e"/><rect y="659.5" fill="#e03c8a"/><rect y="676.5" fill="#ea2791"/>
</g>
<g class="s" transform="translate(1348.5,0)">
<rect y="183.5" fill="#f8e11e"/><rect y="200.5" fill="#f6d820"/><rect y="217.5" fill="#f0720c"/><rect y="234.5" fill="#f53e26"/><rect y="251.5" fill="#ef2a3c"/><rect y="268.5" fill="#d20864"/><rect y="285.5" fill="#ea0a8c"/><rect y="302.5" fill="#b91ea6"/><rect y="319.5" fill="#6a0d9e"/><rect y="336.5" fill="#2a0e9a"/><rect y="353.5" fill="#17178e"/><rect y="370.5" fill="#0a8ccc"/><rect y="387.5" fill="#00b294"/><rect y="404.5" fill="#33281f"/><rect y="421.5" fill="#f3e62c"/><rect y="438.5" fill="#d40a6e"/><rect y="455.5" fill="#00a5da"/><rect y="472.5" fill="#272320"/><rect y="489.5" fill="#ffffff"/><rect y="506.5" fill="#f8e020"/><rect y="523.5" fill="#f57f0f"/><rect y="540.5" fill="#e00080"/><rect y="557.5" fill="#0092cc"/><rect y="574.5" fill="#00a55a"/><rect y="591.5" fill="#1e1e1e"/><rect y="608.5" fill="#f3ee80"/><rect y="625.5" fill="#f6ee50"/><rect y="642.5" fill="#f7e81c"/><rect y="659.5" fill="#f6dc20"/><rect y="676.5" fill="#c4a816"/>
</g>
<rect x="1329" y="183" width="19" height="510" fill="url(#mk)"/>
<g transform="translate(19,0)"><rect x="1329" y="183" width="18" height="510" fill="url(#mk)"/></g>
<rect x="1330.5" y="303.5" width="16" height="15" fill="none" stroke="#fff"/>
<path d="M1298.5 698.5H1303.5V706.5H1298.5ZM1317.5 698.5H1322.5V706.5H1317.5ZM1336.5 698.5H1341.5V706.5H1336.5ZM1355.5 698.5H1360.5V706.5H1355.5Z" fill="#f2f2f2" stroke="#c4c4c4"/>
<g><text x="1297" y="720" style="font-size:10px;fill:#bbb">»</text><text x="1316" y="720" style="font-size:10px;fill:#bbb">»</text><text x="1335" y="720" style="font-size:10px;fill:#bbb">»</text><text x="1354" y="720" style="font-size:10px;fill:#bbb">»</text></g>

<!-- status bar -->
<rect x="0" y="733" width="1366" height="33" fill="#f2f2f2"/>
<rect x="0" y="733" width="1366" height="1" fill="#d4d4d4"/>
<rect x="0" y="766" width="1366" height="1" fill="#707070"/>
<rect x="0" y="767" width="1366" height="1" fill="#f4f4f4"/>
<text x="5" y="754" textLength="92" lengthAdjust="spacingAndGlyphs">( 21.947, 188.624 )</text>
<rect x="106.5" y="742.5" width="13" height="13" fill="#f8f8f8" stroke="#222"/><polygon points="110,745 110,753 116,749" fill="#000"/>
<text x="158" y="754" textLength="332" lengthAdjust="spacingAndGlyphs">Artistic Text: Bernard MT Condensed (Normal) (IND) on Layer 1</text>
<rect x="913.5" y="743.5" width="13" height="10" fill="#d8d0d8" stroke="#556"/><circle cx="920" cy="748.5" r="2.6" fill="#eee" stroke="#a02020"/><path d="M916 756.5H924" stroke="#556" fill="none"/>
<path d="M942 750L948 744L954 750L948 755Z" fill="#eee" stroke="#445"/><path d="M943 750H953L948 755Z" fill="#e07810"/><path d="M955 749V755" stroke="#e07810" stroke-width="1.5"/>
<rect x="963.5" y="741.5" width="16" height="16" fill="#231815" stroke="#888"/>
<text x="984" y="754" textLength="88" lengthAdjust="spacingAndGlyphs">C:0 M:0 Y:0 K:100</text>
<line x1="1144.5" y1="740" x2="1144.5" y2="758" class="sep"/>
<path d="M1158 742L1162 750L1160 755H1156L1154 750Z" fill="#fff" stroke="#445" stroke-width="1.2"/><path d="M1154 757.5H1162" stroke="#445" fill="none"/>
<rect x="1171.5" y="740.5" width="17" height="17" fill="#fff" stroke="#444"/><path d="M1172 741L1188 757M1188 741L1172 757" stroke="#222" fill="none"/>
<text x="1192" y="754">None</text>
</svg>
</body>
</html>
